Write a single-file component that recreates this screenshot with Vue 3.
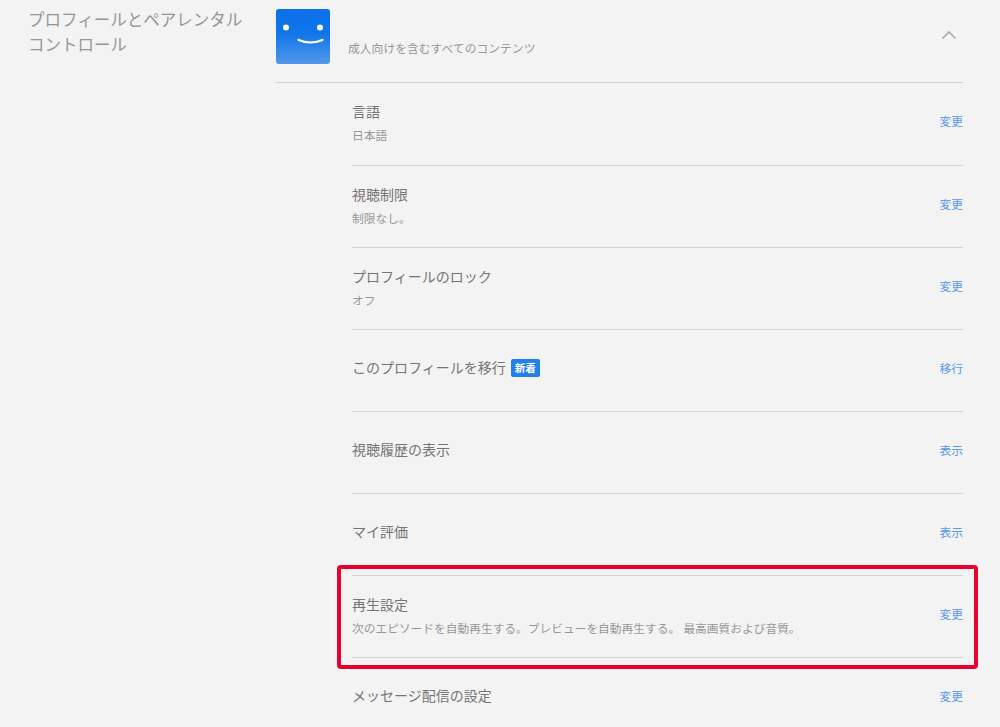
<script setup>
const rows = [
  { title: '言語', sub: '日本語', action: '変更' },
  { title: '視聴制限', sub: '制限なし。', action: '変更' },
  { title: 'プロフィールのロック', sub: 'オフ', action: '変更' },
  { title: 'このプロフィールを移行', badge: '新着', action: '移行' },
  { title: '視聴履歴の表示', action: '表示' },
  { title: 'マイ評価', action: '表示' },
  { title: '再生設定', sub: '次のエピソードを自動再生する。プレビューを自動再生する。 最高画質および音質。', action: '変更', marked: true },
  { title: 'メッセージ配信の設定', action: '変更' },
]
</script>

<template>
  <div class="page">
    <h2 class="heading">プロフィールとペアレンタル<br />コントロール</h2>
    <section class="panel">
      <header class="profile">
        <svg class="avatar" viewBox="0 0 54 55" width="54" height="55" aria-hidden="true">
          <defs>
            <linearGradient id="avatarFill" x1="0" y1="0" x2="0" y2="1">
              <stop offset="0" stop-color="#0b6fe8" />
              <stop offset="0.45" stop-color="#1076e9" />
              <stop offset="1" stop-color="#5297ea" />
            </linearGradient>
          </defs>
          <rect width="54" height="55" rx="3" fill="url(#avatarFill)" />
          <circle cx="10" cy="18.5" r="3" fill="#fff" />
          <circle cx="44" cy="18.5" r="3" fill="#fff" />
          <path d="M22.5 31 Q34.5 36 46.5 31" fill="none" stroke="#fff" stroke-width="2.2" stroke-linecap="round" />
        </svg>
        <span class="rating">成人向けを含むすべてのコンテンツ</span>
        <svg class="chevron" viewBox="0 0 16 10" width="16" height="10" aria-hidden="true">
          <path d="M1.5 8.5 L8 2 L14.5 8.5" fill="none" stroke="#a9a9a9" stroke-width="1.6" />
        </svg>
      </header>
      <ul class="rows">
        <li v-for="row in rows" :key="row.title" class="row" :class="{ marked: row.marked }">
          <div class="texts">
            <div class="title">
              {{ row.title }}
              <span v-if="row.badge" class="badge">{{ row.badge }}</span>
            </div>
            <div v-if="row.sub" class="sub">{{ row.sub }}</div>
          </div>
          <a class="action">{{ row.action }}</a>
          <span v-if="row.marked" class="highlight"></span>
        </li>
      </ul>
    </section>
  </div>
</template>

<style>
html, body { margin: 0; background: #f3f3f3; overflow: hidden; }
</style>

<style scoped>
.page {
  display: flex;
  height: 727px;
  overflow: hidden;
  box-sizing: border-box;
  padding: 8px 37px 0 28px;
  background: #f3f3f3;
  font-family: "Liberation Sans", "Noto Sans CJK JP", sans-serif;
}
.heading {
  flex: 0 0 248px;
  margin: 0;
  font-size: 16.5px;
  font-weight: 400;
  line-height: 25px;
  color: #969696;
}
.panel { flex: 1; min-width: 0; }
.profile {
  display: flex;
  align-items: flex-start;
  height: 73px;
  margin-top: 1px;
  border-bottom: 1px solid #cfcfcf;
}
.avatar { flex: none; }
.rating {
  margin: 32px 0 0 18px;
  font-size: 11.8px;
  line-height: 16px;
  color: #979797;
}
.chevron { margin: 21px 6px 0 auto; }
.rows { list-style: none; margin: 0; padding: 0 0 0 76px; }
.row {
  position: relative;
  display: flex;
  justify-content: space-between;
  align-items: center;
  box-sizing: border-box;
  height: 82px;
  padding-bottom: 4px;
  border-bottom: 1px solid #d4d4d4;
}
.row:first-child { height: 83px; }
.texts { padding-bottom: 2px; }
.title {
  display: flex;
  align-items: center;
  gap: 5px;
  height: 20px;
  font-size: 14px;
  line-height: 20px;
  color: #757575;
}
.sub {
  margin: 6px 0 -4px;
  font-size: 11.72px;
  line-height: 16px;
  color: #979797;
}
.badge {
  padding: 0 4px;
  height: 18px;
  border-radius: 2px;
  background: #1f80ee;
  color: #fff;
  font-size: 10.5px;
  font-weight: 700;
  line-height: 18px;
}
.action {
  font-size: 11.8px;
  line-height: 20px;
  color: #5b97ea;
}
.highlight {
  position: absolute;
  left: -15px;
  right: -15px;
  top: -11px;
  bottom: -12px;
  border: 4px solid #e8002f;
  border-radius: 4px;
  pointer-events: none;
}
</style>
